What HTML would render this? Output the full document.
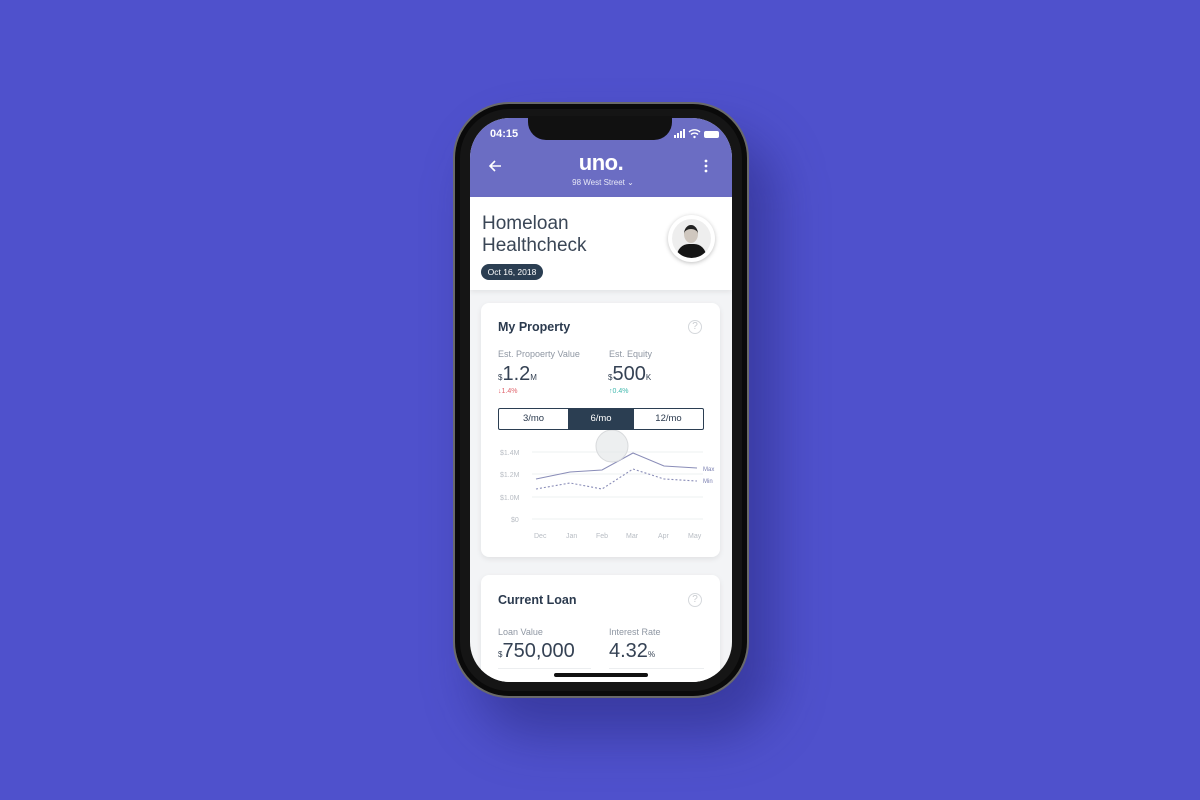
<!DOCTYPE html>
<html><head><style>
*{margin:0;padding:0;box-sizing:border-box}
body{width:1200px;height:800px;background:#4f51cc;font-family:"Liberation Sans",sans-serif;position:relative;overflow:hidden}
.a{position:absolute}
.shadow{left:475px;top:135px;width:300px;height:600px;border-radius:60px;background:rgba(30,30,110,.45);filter:blur(25px)}
.phone{left:453px;top:102px;width:296px;height:596px;border-radius:56px;background:#151515;border:2px solid #6a6a6a;box-shadow:inset 0 0 0 5px #0a0a0a}
.screen{left:470px;top:118px;width:262px;height:564px;border-radius:40px;background:#f3f4f6;overflow:hidden}
.notch{left:528px;top:116px;width:144px;height:24px;background:#111;border-radius:0 0 18px 18px}
.t{color:#2b3a4e}
.g{color:#8f97a3}
.card{background:#fff;border-radius:8px;box-shadow:0 2px 6px rgba(0,0,0,.08)}
.help{width:14px;height:14px;border:1px solid #d5d8dc;border-radius:50%;color:#c9ccd0;font-size:10px;text-align:center;line-height:12px}
</style></head><body>
<div class="a shadow"></div>
<div class="a phone"></div>
<div class="a screen">
 <div class="a" style="left:0;top:0;width:262px;height:79px;background:#6b6dc3"></div>
 <div class="a" style="left:0;top:79px;width:262px;height:93px;background:#fff;box-shadow:0 2px 5px rgba(0,0,0,.07)"></div>
 <div class="a card" style="left:11px;top:457px;width:239px;height:130px">
  <div class="a t" style="left:17px;top:18px;font-size:12.5px;font-weight:bold">Current Loan</div>
  <div class="a help" style="left:207px;top:18px">?</div>
  <div class="a g" style="left:17px;top:52px;font-size:9px">Loan Value</div>
  <div class="a g" style="left:128px;top:52px;font-size:9px">Interest Rate</div>
  <div class="a t" style="left:17px;top:65px;font-size:20px;color:#354254"><span style="font-size:8px">$</span>750,000</div>
  <div class="a t" style="left:128px;top:65px;font-size:20px;color:#354254">4.32<span style="font-size:8px">%</span></div>
  <div class="a" style="left:17px;top:93px;width:93px;height:1px;background:#eceef0"></div>
  <div class="a" style="left:128px;top:93px;width:95px;height:1px;background:#eceef0"></div>
 </div>
 <div class="a" style="left:84px;top:555px;width:94px;height:4px;border-radius:2px;background:#111"></div>
</div>
<div class="a notch"></div>
<div class="a" style="left:490px;top:128px;color:#fff;font-size:11px;font-weight:bold">04:15</div>
<svg class="a" style="left:672px;top:129px" width="50" height="10"><rect x="2" y="6" width="2" height="3" fill="#fff"/><rect x="5" y="4" width="2" height="5" fill="#fff"/><rect x="8" y="2" width="2" height="7" fill="#fff"/><rect x="11" y="0" width="2" height="9" fill="#fff"/><path d="M17 3a8 8 0 0 1 11 0M19 5.5a5 5 0 0 1 7 0" stroke="#fff" stroke-width="1.4" fill="none"/><circle cx="22.5" cy="8" r="1.2" fill="#fff"/><rect x="32" y="2" width="15" height="7" rx="2" fill="#fff"/></svg>
<svg class="a" style="left:488px;top:159px" width="14" height="14"><path d="M13 7H2M7 2L2 7l5 5" stroke="#fff" stroke-width="1.6" fill="none"/></svg>
<div class="a" style="left:576px;top:150px;width:50px;text-align:center;color:#fff;font-size:22px;font-weight:bold;letter-spacing:-.5px">uno.</div>
<div class="a" style="left:560px;top:178px;width:86px;text-align:center;color:#e7e8f7;font-size:8px">98 West Street ⌄</div>
<svg class="a" style="left:703px;top:159px" width="6" height="14"><circle cx="3" cy="2" r="1.4" fill="#fff"/><circle cx="3" cy="7" r="1.4" fill="#fff"/><circle cx="3" cy="12" r="1.4" fill="#fff"/></svg>
<div class="a t" style="left:482px;top:213px;font-size:19px;line-height:22px;color:#3a4656">Homeloan<br>Healthcheck</div>
<div class="a" style="left:481px;top:264px;width:62px;height:16px;border-radius:8px;background:#2b3e52;color:#fff;font-size:8.5px;line-height:16px;text-align:center">Oct 16, 2018</div>
<div class="a" style="left:668px;top:215px;width:47px;height:47px;border-radius:50%;background:#fff;box-shadow:0 1px 4px rgba(0,0,0,.25)"><div style="margin:4px;width:39px;height:39px;border-radius:50%;background:#eee;overflow:hidden;position:relative"><div style="position:absolute;left:12px;top:6px;width:14px;height:18px;border-radius:50%;background:#cfc7bf;border-top:4px solid #222"></div><div style="position:absolute;left:5px;top:25px;width:29px;height:20px;border-radius:12px 12px 0 0;background:#151515"></div></div></div>

<div class="a card" style="left:481px;top:303px;width:239px;height:254px"></div>
<div class="a t" style="left:498px;top:320px;font-size:12.5px;font-weight:bold">My Property</div>
<div class="a help" style="left:688px;top:320px">?</div>
<div class="a g" style="left:498px;top:349px;font-size:9px">Est. Propoerty Value</div>
<div class="a g" style="left:609px;top:349px;font-size:9px">Est. Equity</div>
<div class="a t" style="left:498px;top:363px;font-size:20px;color:#354254"><span style="font-size:8px">$</span>1.2<span style="font-size:8px">M</span></div>
<div class="a t" style="left:608px;top:363px;font-size:20px;color:#354254"><span style="font-size:8px">$</span>500<span style="font-size:8px">K</span></div>
<div class="a" style="left:498px;top:388px;font-size:7px;color:#e0646c">↓1.4%</div>
<div class="a" style="left:609px;top:388px;font-size:7px;color:#3fb8ad">↑0.4%</div>
<div class="a" style="left:498px;top:408px;width:206px;height:22px;border:1px solid #2b3e52;border-radius:2px;display:flex;font-size:9.5px;color:#2b3a4e;line-height:20px;text-align:center">
 <div style="width:69px">3/mo</div><div style="width:66px;background:#2b3e52;color:#fff">6/mo</div><div style="flex:1">12/mo</div></div>
<svg class="a" style="left:481px;top:430px" width="239" height="120">
 <g stroke="#eef0f2"><line x1="51" y1="22" x2="222" y2="22"/><line x1="51" y1="44" x2="222" y2="44"/><line x1="51" y1="67" x2="222" y2="67"/><line x1="51" y1="89" x2="222" y2="89"/></g>
 <g fill="#b8bdc4" font-size="7" font-family="Liberation Sans"><text x="19" y="25">$1.4M</text><text x="19" y="47">$1.2M</text><text x="19" y="70">$1.0M</text><text x="30" y="92">$0</text>
 <text x="53" y="108">Dec</text><text x="85" y="108">Jan</text><text x="115" y="108">Feb</text><text x="145" y="108">Mar</text><text x="177" y="108">Apr</text><text x="207" y="108">May</text>
 <text x="222" y="41" fill="#7a7fb0" font-size="6">Max</text><text x="222" y="53" fill="#7a7fb0" font-size="6">Min</text></g>
 <polyline points="55,49 89,42 121,40 152,23 183,36 216,38" fill="none" stroke="#8a8db8" stroke-width="1.1"/>
 <polyline points="55,59 89,53 121,59 152,39 183,49 216,51" fill="none" stroke="#8a8db8" stroke-width="1.1" stroke-dasharray="2,2"/>
 <circle cx="131" cy="16" r="16" fill="rgba(230,232,234,.7)" stroke="#d8dadc"/>
</svg>
</body></html>
